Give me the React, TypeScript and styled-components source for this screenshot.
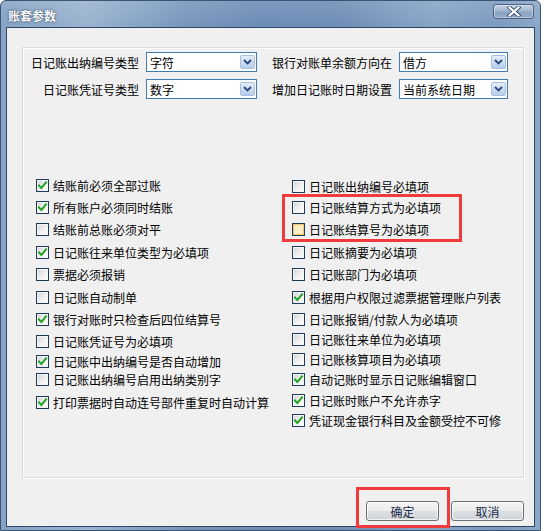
import React from "react";
import styled, { createGlobalStyle } from "styled-components";

const GlobalStyle = createGlobalStyle`
  html, body { margin: 0; padding: 0; background: #ffffff; }
  body { font-family: "Noto Sans CJK SC", "Liberation Sans", sans-serif; }
  #root { width: 555px; height: 531px; }
`;

const Window = styled.div`
  position: relative;
  box-sizing: border-box;
  width: 541px;
  height: 531px;
  display: flex;
  flex-direction: column;
  border: 1px solid #3a5476;
  border-radius: 6px 6px 0 0;
  padding: 0 5px 3px 5px;
  background:
    linear-gradient(180deg, rgba(255, 255, 255, 0.12), rgba(255, 255, 255, 0) 26px),
    linear-gradient(90deg, #86a3c5 0%, #9ab2cf 16%, #8aa6c7 24%, #7896bc 34%, #6b8cb5 48%, #6d8db5 62%, #86a3c6 80%, #7c9ac0 92%, #8ba7c8 100%);
`;

const TitleBar = styled.div`
  height: 26px;
  display: flex;
  align-items: center;
  justify-content: space-between;
  padding-left: 2px;
`;

const Title = styled.span`
  color: #ffffff;
  font-size: 12px;
  font-weight: bold;
  text-shadow: 0 0 1px rgba(20, 40, 70, 0.9), 0 0 3px rgba(20, 40, 70, 0.5);
  margin-top: 2px;
`;

const CloseButton = styled.div`
  align-self: flex-start;
  margin-top: 3px;
  margin-right: 1px;
  box-sizing: border-box;
  width: 41px;
  height: 15px;
  border: 1px solid #4a6283;
  border-radius: 3px;
  background: linear-gradient(180deg, #c3d2e4 0%, #a3b8d2 45%, #8ba4c3 55%, #93abc9 100%);
  box-shadow: inset 0 0 0 1px rgba(255, 255, 255, 0.35);
  display: flex;
  align-items: center;
  justify-content: center;
`;

const Client = styled.div`
  flex: 1;
  box-sizing: border-box;
  background: #f0f0f0;
  border: 1px solid #2f4565;
  display: flex;
  flex-direction: column;
  padding: 19px 10px 0 15px;
`;

const Panel = styled.div`
  box-sizing: border-box;
  height: 431px;
  border: 1px solid #d3dde6;
  box-shadow: inset 1px 1px 0 #ffffff, 1px 1px 0 #ffffff;
  padding-top: 4px;
  display: flex;
  flex-direction: column;
`;

const FieldGrid = styled.div`
  display: flex;
  flex-direction: column;
  gap: 7px;
`;

const FieldRow = styled.div`
  display: flex;
  align-items: center;
  height: 20px;
`;

const FieldLabel = styled.span<{ $w: number; $ml?: number }>`
  width: ${(p) => p.$w}px;
  margin-left: ${(p) => p.$ml ?? 0}px;
  margin-right: 7px;
  text-align: right;
  font-size: 12px;
  color: #000;
  white-space: nowrap;
`;

const Select = styled.div<{ $w: number }>`
  box-sizing: border-box;
  width: ${(p) => p.$w}px;
  height: 20px;
  border: 1px solid #3f7cb0;
  background: #fff;
  display: flex;
  align-items: center;
  justify-content: space-between;
  padding: 0 1px 0 3px;
  font-size: 12px;
  color: #000;
`;

const SelectArrow = styled.span`
  box-sizing: border-box;
  width: 15px;
  height: 14px;
  border: 1px solid #a8c0e0;
  border-radius: 2px;
  background: linear-gradient(180deg, #e4edf9 0%, #cddcf2 50%, #b7cdee 100%);
  display: flex;
  align-items: center;
  justify-content: center;
`;

const Columns = styled.div`
  margin-top: 71px;
  padding-left: 13px;
  display: grid;
  grid-template-columns: 256px 1fr;
`;

const CheckList = styled.div`
  display: flex;
  flex-direction: column;
`;

const CheckRow = styled.div<{ $gap: number }>`
  height: 16px;
  margin-top: ${(p) => p.$gap}px;
  display: flex;
  align-items: center;
  gap: 4px;
  font-size: 12px;
  color: #000;
  white-space: nowrap;
`;

const Box = styled.span<{ $hot?: boolean }>`
  box-sizing: border-box;
  width: 13px;
  height: 13px;
  flex: none;
  border: 1px solid #1f3b5c;
  background: ${(p) =>
    p.$hot
      ? "linear-gradient(135deg, #fbe7b0 0%, #fdf3d6 100%)"
      : "linear-gradient(135deg, #cfcfcf 0%, #ececec 45%, #ffffff 100%)"};
  box-shadow: ${(p) => (p.$hot ? "inset 0 0 0 1px #f4c36a" : "inset 0 0 0 1px #f6f6f6")};
  display: flex;
  align-items: center;
  justify-content: center;
`;

const Footer = styled.div`
  margin-top: 23px;
  display: flex;
  justify-content: flex-end;
  gap: 12px;
`;

const Button = styled.div`
  box-sizing: border-box;
  width: 73px;
  height: 20px;
  border: 1px solid #707070;
  border-radius: 3px;
  background: linear-gradient(180deg, #f3f3f3 0%, #ececec 48%, #dcdfe3 52%, #cfd3d8 100%);
  box-shadow: inset 0 0 0 1px rgba(255, 255, 255, 0.7);
  display: flex;
  align-items: center;
  justify-content: center;
  font-size: 12px;
  color: #1b2b48;
`;

const Annotation = styled.div<{ $x: number; $y: number; $w: number; $h: number }>`
  position: absolute;
  left: ${(p) => p.$x}px;
  top: ${(p) => p.$y}px;
  width: ${(p) => p.$w}px;
  height: ${(p) => p.$h}px;
  box-sizing: border-box;
  border: 3px solid #ef3b3b;
  pointer-events: none;
`;

const Check = () => (
  <svg width="11" height="11" viewBox="0 0 11 11">
    <path d="M2 5.5 L4.4 8 L9 2.5" fill="none" stroke="#22a322" strokeWidth="2" strokeLinecap="square" />
  </svg>
);

const Chevron = () => (
  <svg width="9" height="6" viewBox="0 0 9 6">
    <path d="M1 1 L4.5 4.5 L8 1" fill="none" stroke="#27497a" strokeWidth="1.8" />
  </svg>
);

const CloseX = () => (
  <svg width="16" height="11" viewBox="0 0 16 11">
    <path d="M3.5 1.5 L12.5 9.5 M12.5 1.5 L3.5 9.5" stroke="#3b4f6a" strokeWidth="4" strokeLinecap="square" />
    <path d="M3.5 1.5 L12.5 9.5 M12.5 1.5 L3.5 9.5" stroke="#ffffff" strokeWidth="2.2" strokeLinecap="square" />
  </svg>
);

type Item = { text: string; checked: boolean; gap: number; hot?: boolean };

const leftItems: Item[] = [
  { text: "结账前必须全部过账", checked: true, gap: 7 },
  { text: "所有账户必须同时结账", checked: true, gap: 6 },
  { text: "结账前总账必须对平", checked: false, gap: 6 },
  { text: "日记账往来单位类型为必填项", checked: true, gap: 7 },
  { text: "票据必须报销", checked: false, gap: 6 },
  { text: "日记账自动制单", checked: false, gap: 7 },
  { text: "银行对账时只检查后四位结算号", checked: true, gap: 6 },
  { text: "日记账凭证号为必填项", checked: false, gap: 6 },
  { text: "日记账中出纳编号是否自动增加", checked: true, gap: 4 },
  { text: "日记账出纳编号启用出纳类别字", checked: false, gap: 2 },
  { text: "打印票据时自动连号部件重复时自动计算", checked: true, gap: 7 },
];

const rightItems: Item[] = [
  { text: "日记账出纳编号必填项", checked: false, gap: 8 },
  { text: "日记账结算方式为必填项", checked: false, gap: 5 },
  { text: "日记账结算号为必填项", checked: false, gap: 6, hot: true },
  { text: "日记账摘要为必填项", checked: false, gap: 7 },
  { text: "日记账部门为必填项", checked: false, gap: 6 },
  { text: "根据用户权限过滤票据管理账户列表", checked: true, gap: 7 },
  { text: "日记账报销/付款人为必填项", checked: false, gap: 6 },
  { text: "日记账往来单位为必填项", checked: false, gap: 4 },
  { text: "日记账核算项目为必填项", checked: false, gap: 4 },
  { text: "自动记账时显示日记账编辑窗口", checked: true, gap: 4 },
  { text: "日记账时账户不允许赤字", checked: true, gap: 5 },
  { text: "凭证现金银行科目及金额受控不可修", checked: true, gap: 4 },
];

const CheckItems = ({ items }: { items: Item[] }) => (
  <CheckList>
    {items.map((it) => (
      <CheckRow key={it.text} $gap={it.gap}>
        <Box $hot={it.hot}>{it.checked && <Check />}</Box>
        <span>{it.text}</span>
      </CheckRow>
    ))}
  </CheckList>
);

export default function App() {
  return (
    <>
      <GlobalStyle />
      <Window>
        <TitleBar>
          <Title>账套参数</Title>
          <CloseButton>
            <CloseX />
          </CloseButton>
        </TitleBar>
        <Client>
          <Panel>
            <FieldGrid>
              <FieldRow>
                <FieldLabel $w={116}>日记账出纳编号类型</FieldLabel>
                <Select $w={111}>
                  字符
                  <SelectArrow>
                    <Chevron />
                  </SelectArrow>
                </Select>
                <FieldLabel $w={120} $ml={15}>银行对账单余额方向在</FieldLabel>
                <Select $w={109}>
                  借方
                  <SelectArrow>
                    <Chevron />
                  </SelectArrow>
                </Select>
              </FieldRow>
              <FieldRow>
                <FieldLabel $w={116}>日记账凭证号类型</FieldLabel>
                <Select $w={111}>
                  数字
                  <SelectArrow>
                    <Chevron />
                  </SelectArrow>
                </Select>
                <FieldLabel $w={120} $ml={15}>增加日记账时日期设置</FieldLabel>
                <Select $w={109}>
                  当前系统日期
                  <SelectArrow>
                    <Chevron />
                  </SelectArrow>
                </Select>
              </FieldRow>
            </FieldGrid>
            <Columns>
              <CheckItems items={leftItems} />
              <CheckItems items={rightItems} />
            </Columns>
          </Panel>
          <Footer>
            <Button>确定</Button>
            <Button>取消</Button>
          </Footer>
        </Client>
        <Annotation $x={281} $y={193} $w={180} $h={48} />
        <Annotation $x={355} $y={486} $w={94} $h={41} />
      </Window>
    </>
  );
}
